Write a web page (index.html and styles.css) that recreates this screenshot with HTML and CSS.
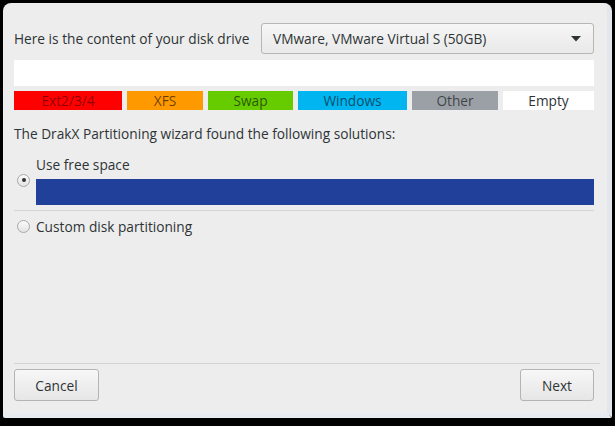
FILE: index.html
```html
<!DOCTYPE html>
<html>
<head>
<meta charset="utf-8">
<link rel="stylesheet" href="styles.css">
</head>
<body>
<div class="window">
  <div class="content">
    <div class="drive-row">
      <span class="label">Here is the content of your disk drive</span>
      <div class="combo">
        <span>VMware, VMware Virtual S (50GB)</span>
        <svg class="arrow" width="10" height="6" viewBox="0 0 10 6"><path d="M0 0 H10 L5 5.5 Z" fill="#2e3436"/></svg>
      </div>
    </div>
    <div class="disk-bar"></div>
    <div class="legend">
      <div class="lg ext" style="width:108px">Ext2/3/4</div>
      <div class="lg xfs" style="width:76px">XFS</div>
      <div class="lg swap" style="width:85px">Swap</div>
      <div class="lg win" style="width:109px">Windows</div>
      <div class="lg other" style="width:86px">Other</div>
      <div class="lg empty" style="width:90px">Empty</div>
    </div>
    <div class="intro">The DrakX Partitioning wizard found the following solutions:</div>
    <div class="option first">
      <div class="radio-col"><span class="radio checked"></span></div>
      <div class="opt-body">
        <div class="opt-label">Use free space</div>
        <div class="solution-bar"></div>
      </div>
    </div>
    <div class="sep"></div>
    <div class="option second">
      <div class="radio-col"><span class="radio"></span></div>
      <div class="opt-body">
        <div class="opt-label">Custom disk partitioning</div>
      </div>
    </div>
    <div class="spacer"></div>
    <div class="bottom-sep"></div>
    <div class="buttons">
      <button class="btn cancel">Cancel</button>
      <button class="btn next">Next</button>
    </div>
  </div>
</div>
</body>
</html>
```
FILE: styles.css
```css
html, body {
  margin: 0;
  padding: 0;
  background: #000;
}
body {
  width: 615px;
  height: 426px;
  overflow: hidden;
  font-family: "Open Sans", "DejaVu Sans", sans-serif;
  font-size: 13.7px;
  color: #2e3436;
}
.window {
  margin: 3px 0 0 3px;
  width: 609px;
  height: 415px;
  box-sizing: border-box;
  background: #ededed;
  border-radius: 8px 8px 2px 2px;
  border-right: 5px solid #e3e7ed;
  border-bottom: 5px solid #e8ebf0;
}
.content {
  box-sizing: border-box;
  height: 100%;
  padding: 20px 13px 0 11px;
  display: flex;
  flex-direction: column;
}
.drive-row {
  display: flex;
  align-items: center;
  height: 31px;
}
.label {
  width: 247px;
  white-space: nowrap;
}
.combo {
  flex: 1;
  height: 31px;
  box-sizing: border-box;
  border: 1px solid #b6b6b3;
  border-radius: 3px;
  background: linear-gradient(#f6f6f6, #e9e9e9);
  display: flex;
  align-items: center;
  justify-content: space-between;
  padding: 0 12px 0 11px;
  font-size: 13.7px;
}
.arrow { display: block; }
.disk-bar {
  margin-top: 6px;
  height: 26px;
  background: #fff;
}
.legend {
  margin-top: 5px;
  display: flex;
  gap: 5px;
  height: 19px;
}
.lg {
  box-sizing: border-box;
  text-align: center;
  line-height: 19px;
  font-size: 13.7px;
  color: rgba(0,0,0,0.6);
}
.lg.empty { flex: 1; }
.ext { background: #ff0000; color: rgba(80,0,0,0.65); }
.xfs { background: #ff9900; }
.swap { background: #66cc00; }
.win { background: #00b5f0; }
.other { background: #9ba0a6; }
.empty { background: #fff; color: #2e3436; }
.intro {
  margin-top: 14px;
  line-height: 19px;
}
.option {
  display: flex;
}
.option.first {
  margin-top: 12px;
}
.radio-col {
  width: 22px;
  display: flex;
  align-items: center;
  padding-left: 3px;
  box-sizing: border-box;
}
.radio {
  display: block;
  width: 13px;
  height: 13px;
  box-sizing: border-box;
  border: 1px solid #a8a8a8;
  border-radius: 50%;
  background: linear-gradient(#fbfbfb, #e3e3e3);
  position: relative;
}
.radio.checked::after {
  content: "";
  position: absolute;
  left: 3.5px;
  top: 3.5px;
  width: 4px;
  height: 4px;
  border-radius: 50%;
  background: #2e3436;
}
.opt-body { flex: 1; }
.opt-label {
  line-height: 19px;
}
.solution-bar {
  margin-top: 5px;
  height: 26px;
  background: #21409a;
}
.sep {
  margin-top: 5px;
  height: 1px;
  background: #d5d5d5;
}
.option.second {
  margin-top: 6px;
}
.spacer { flex: 1; }
.bottom-sep {
  height: 1px;
  background: #d3d3d3;
  margin-right: -6px;
}
.buttons {
  margin-top: 5px;
  margin-bottom: 12px;
  display: flex;
  justify-content: space-between;
}
.btn {
  height: 32px;
  box-sizing: border-box;
  border: 1px solid #b4b4b4;
  border-radius: 3px;
  background: linear-gradient(#f7f7f7, #e6e6e6);
  font-family: inherit;
  font-size: 13.7px;
  color: #2e3436;
  padding: 0;
}
.cancel { width: 85px; }
.next { width: 74px; }
```
